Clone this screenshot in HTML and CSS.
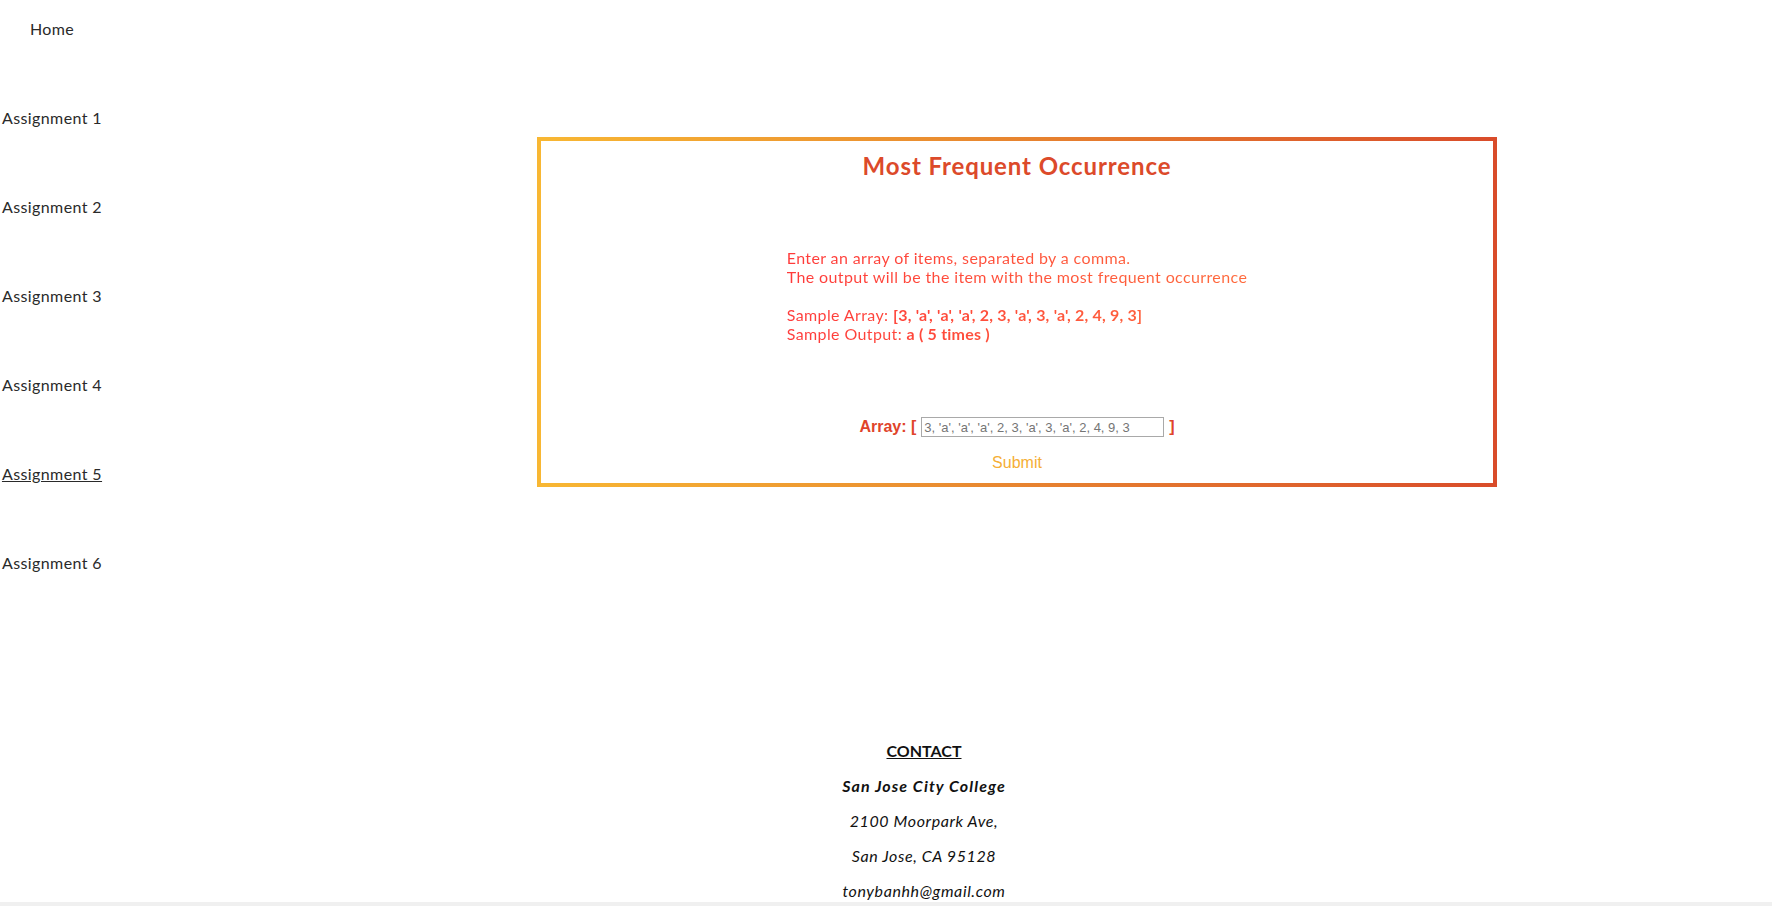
FILE: index.html
```html
<!DOCTYPE html>
<html lang="en">
<head>
<meta charset="utf-8">
<title>Most Frequent Occurrence</title>
<link rel="stylesheet" href="styles.css">
</head>
<body>
<div class="page">
  <div class="top">
    <nav class="nav">
      <a class="nav-link" href="#">Home</a>
      <a class="nav-link" href="#">Assignment 1</a>
      <a class="nav-link" href="#">Assignment 2</a>
      <a class="nav-link" href="#">Assignment 3</a>
      <a class="nav-link" href="#">Assignment 4</a>
      <a class="nav-link active" href="#">Assignment 5</a>
      <a class="nav-link" href="#">Assignment 6</a>
    </nav>
    <main class="main">
      <section class="card">
        <h2 class="title">Most Frequent Occurrence</h2>
        <div class="desc-wrap">
          <p class="desc">Enter an array of items, separated by a comma.<br>The output will be the item with the most frequent occurrence<br><br>Sample Array: <b>[3, 'a', 'a', 'a', 2, 3, 'a', 3, 'a', 2, 4, 9, 3]</b><br>Sample Output: <b>a ( 5 times )</b></p>
        </div>
        <form class="form">
          <div class="array-row">
            <label class="array-label">Array: [</label>
            <input class="array-input" type="text" placeholder="3, 'a', 'a', 'a', 2, 3, 'a', 3, 'a', 2, 4, 9, 3">
            <span class="array-label">]</span>
          </div>
          <button class="submit" type="button">Submit</button>
        </form>
      </section>
    </main>
  </div>
  <footer class="footer">
    <p class="contact">CONTACT</p>
    <p class="school">San Jose City College</p>
    <p>2100 Moorpark Ave,</p>
    <p>San Jose, CA 95128</p>
    <p>tonybanhh@gmail.com</p>
  </footer>
</div>
</body>
</html>
```
FILE: styles.css
```css
html {
  background: #f0f0f0;
}
body {
  margin: 0;
  background: #fff;
  font-family: "Lato", "Open Sans", sans-serif;
  color: #222;
}
.top {
  display: flex;
  align-items: flex-start;
}
.nav {
  width: 104px;
  padding-top: 19px;
  display: flex;
  flex-direction: column;
  gap: 69px;
  text-align: center;
}
.nav-link {
  display: block;
  font-size: 16px;
  line-height: 20px;
  letter-spacing: 0.4px;
  color: #2a2a2a;
  text-decoration: none;
  white-space: nowrap;
}
.nav-link.active {
  text-decoration: underline;
}
.main {
  padding-top: 137px;
  padding-left: 433px;
}
.card {
  box-sizing: border-box;
  width: 960px;
  height: 350px;
  border: 4px solid;
  border-image: linear-gradient(to right, #f8b733, #e98a30 45%, #d94c2a) 1;
  text-align: center;
}
.title {
  margin: 10px 0 0;
  font-size: 24px;
  line-height: 30px;
  font-weight: 700;
  letter-spacing: 0.9px;
  color: #dc4a2a;
}
.desc-wrap {
  margin-top: 67px;
}
.desc {
  display: inline-block;
  margin: 0;
  text-align: left;
  font-size: 16px;
  line-height: 19px;
  font-weight: 400;
  letter-spacing: 0.38px;
  background: linear-gradient(to right, #ff3a3a, #ff6a3c);
  -webkit-background-clip: text;
  background-clip: text;
  color: transparent;
}
.desc b {
  font-weight: 700;
  letter-spacing: 0.2px;
}
.form {
  margin-top: 74px;
}
.array-row {
  display: flex;
  justify-content: center;
  align-items: center;
  gap: 5px;
  height: 20px;
  font-family: "Liberation Sans", Arial, sans-serif;
}
.array-label {
  font-size: 16px;
  font-weight: 700;
  color: #e0442a;
}
.array-input {
  box-sizing: border-box;
  width: 243px;
  height: 20px;
  margin: 0;
  padding: 1px 2px;
  border: 1px solid #a9a9a9;
  font-family: "Liberation Sans", Arial, sans-serif;
  font-size: 13px;
}
.array-input::placeholder {
  color: #757575;
}
.submit {
  margin-top: 16px;
  padding: 0;
  border: none;
  background: none;
  font-family: "Liberation Sans", Arial, sans-serif;
  font-size: 16px;
  line-height: 20px;
  color: #f5ae35;
  cursor: pointer;
}
.footer {
  margin-top: 168px;
  padding-left: 76px;
  padding-bottom: 2px;
  text-align: center;
  font-style: italic;
  color: #111;
}
.footer p {
  margin: 16px 0 0;
  font-size: 16px;
  line-height: 19px;
  letter-spacing: 0.6px;
}
.footer .contact {
  font-style: normal;
  font-weight: 700;
  letter-spacing: 0;
  text-decoration: underline;
}
.footer .school {
  font-weight: 700;
  letter-spacing: 1.1px;
}
```
